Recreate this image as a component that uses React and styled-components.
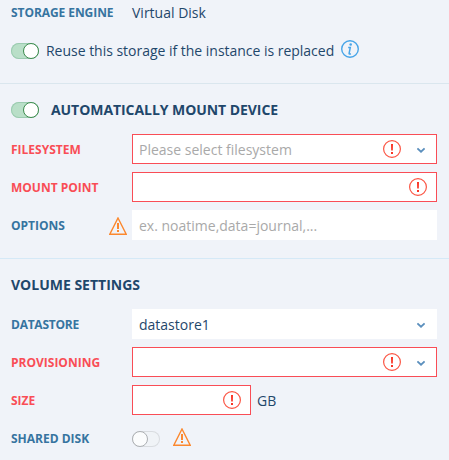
import React from "react";
import styled, { createGlobalStyle } from "styled-components";

const GlobalStyle = createGlobalStyle`
  * { box-sizing: border-box; }
  body {
    margin: 0;
    overflow: hidden;
    background: #f0f3f9;
    color: #1f476b;
    font: 14px/20px "Open Sans", sans-serif;
  }
`;

const Panel = styled.main`
  width: 449px;
  height: 460px;
  overflow: hidden;
  background: #f0f3f9;
`;

const Section = styled.section`
  display: flex;
  flex-direction: column;
  gap: 8px;
  height: ${(p) => p.$height}px;
  padding: ${(p) => p.$top}px 12px 0 11px;
  border-bottom: ${(p) => (p.$line ? `1px solid ${p.$line}` : "none")};
`;

const Row = styled.div`
  display: flex;
  flex: none;
  align-items: center;
  height: 30px;
`;

const EngineRow = styled(Row)`
  height: 28px;
  padding-bottom: 2px;
`;

const HeadingRow = styled(Row)`
  padding-bottom: 2px;
`;

const LabelCell = styled.div`
  display: flex;
  flex: none;
  align-items: center;
  justify-content: space-between;
  width: 121px;
  padding: ${(p) => p.$drop || 0}px 5px 0 0;
`;

const Label = styled.label`
  color: ${(p) => (p.$invalid ? "#f94d56" : "#3674a0")};
  font-size: 12px;
  font-weight: 700;
  line-height: 18px;
  letter-spacing: ${(p) => p.$tracking || 0}px;
  white-space: nowrap;
`;

const Heading = styled.h2`
  margin: 0;
  font-size: 14px;
  font-weight: 700;
  line-height: 20px;
  letter-spacing: ${(p) => p.$tracking || 0}px;
  white-space: nowrap;
`;

const Text = styled.span`
  white-space: nowrap;
`;

const ToggleText = styled(Text)`
  margin: 0 7px;
  letter-spacing: -0.02px;
`;

const Unit = styled(Text)`
  margin-left: 6px;
  padding-top: 2px;
`;

const Track = styled.span`
  display: flex;
  flex: none;
  justify-content: ${(p) => (p.$on ? "flex-end" : "flex-start")};
  width: 28px;
  height: 16px;
  margin: ${(p) => p.$drop || 0}px ${(p) => p.$gap || 0}px 0 0;
  border-radius: 8px;
  background: ${(p) => (p.$on ? "#b9dfc8" : "#f0f3f7")};
  box-shadow: inset 0 0 0 1px ${(p) => (p.$on ? "#9bcbb0" : "#d9dce0")};
`;

const Knob = styled.span`
  width: 16px;
  height: 16px;
  border: 1px solid ${(p) => (p.$on ? "#3d8b4e" : "#acafb3")};
  border-radius: 50%;
  background: ${(p) => (p.$on ? "#fff" : "#fbfcfd")};
`;

const Field = styled.div`
  display: flex;
  flex: none;
  align-items: center;
  width: ${(p) => p.$width || 305}px;
  height: 30px;
  padding: 2px ${(p) => (p.$select ? 11 : 9)}px 0 6px;
  border: 1px solid ${(p) => (p.$invalid ? "#f94d56" : "#fff")};
  background: #fff;
`;

const Value = styled.span`
  flex: 1;
  color: ${(p) => (p.$placeholder ? "#a9a9a9" : "inherit")};
  white-space: nowrap;
`;

const Icon = styled.svg`
  display: block;
  flex: none;
  fill: none;
`;

const FieldIcon = styled(Icon)`
  margin: 0 ${(p) => p.$gap || 0}px 2px 0;
`;

const InfoGlyph = styled(Icon)`
  margin-bottom: 4px;
`;

const WarningGlyph = styled(Icon)`
  margin: 0 0 ${(p) => p.$lift || 0}px ${(p) => p.$gap || 0}px;
`;

const Chevron = () => (
  <Icon width="8" height="6" viewBox="0 0 8 6">
    <path d="M.4 1.4 4 4.7 7.6 1.4" stroke="#5b8fbd" strokeWidth="1.8" />
  </Icon>
);

const Alert = ({ gap }) => (
  <FieldIcon $gap={gap} width="18" height="18" viewBox="0 0 18 18">
    <circle cx="9" cy="9" r="8.4" stroke="#fb5544" strokeWidth="1.2" />
    <path d="M8 4h2l-.2 6.5H8.2zM8 12h2v2H8z" fill="#fa3424" />
  </FieldIcon>
);

const Info = () => (
  <InfoGlyph width="18" height="18" viewBox="0 0 18 18">
    <circle cx="9" cy="9" r="8.3" stroke="#48a5e8" strokeWidth="1.4" />
    <circle cx="9.7" cy="4.5" r="1.3" fill="#48a5e8" />
    <path d="M7.2 7.4h2.1L8.1 13.3q-.2 1.2 1.8.5" stroke="#48a5e8" strokeWidth="1.5" />
  </InfoGlyph>
);

const Warning = ({ gap, lift }) => (
  <WarningGlyph $gap={gap} $lift={lift} width="18" height="18" viewBox="0 0 18 18">
    <path d="M9 1 17.2 17.3H.8z" stroke="#fb882f" strokeWidth="1.4" />
    <path d="M8 6h2v6H8zM8 13h2v2H8z" fill="#fb882f" />
  </WarningGlyph>
);

const Toggle = ({ on, gap, drop }) => (
  <Track $on={on} $gap={gap} $drop={drop} role="switch" aria-checked={!!on}>
    <Knob $on={on} />
  </Track>
);

const FormRow = ({ label, tracking, invalid, warning, children }) => (
  <Row>
    <LabelCell $drop={2}>
      <Label $invalid={invalid} $tracking={tracking}>{label}</Label>
      {warning && <Warning />}
    </LabelCell>
    {children}
  </Row>
);

const Input = ({ value, placeholder, invalid, select, width }) => (
  <Field $invalid={invalid} $select={select} $width={width}>
    <Value $placeholder={!value}>{value || placeholder}</Value>
    {invalid && <Alert gap={select ? 16 : 0} />}
    {select && <Chevron />}
  </Field>
);

export default function App() {
  return (
    <>
      <GlobalStyle />
      <Panel>
        <Section $height={84} $top={0} $line="#dae6ee">
          <EngineRow>
            <LabelCell>
              <Label $tracking={-0.07}>STORAGE ENGINE</Label>
            </LabelCell>
            <Text>Virtual Disk</Text>
          </EngineRow>
          <Row>
            <Toggle on />
            <ToggleText>Reuse this storage if the instance is replaced</ToggleText>
            <Info />
          </Row>
        </Section>
        <Section $height={175} $top={12} $line="#d5e9f7">
          <HeadingRow>
            <Toggle on gap={12} />
            <Heading $tracking={-0.06}>AUTOMATICALLY MOUNT DEVICE</Heading>
          </HeadingRow>
          <FormRow label="FILESYSTEM" invalid>
            <Input placeholder="Please select filesystem" invalid select />
          </FormRow>
          <FormRow label="MOUNT POINT" invalid>
            <Input invalid />
          </FormRow>
          <FormRow label="OPTIONS" warning>
            <Input placeholder="ex. noatime,data=journal,..." />
          </FormRow>
        </Section>
        <Section $height={201} $top={12}>
          <HeadingRow>
            <Heading>VOLUME SETTINGS</Heading>
          </HeadingRow>
          <FormRow label="DATASTORE" tracking={-0.25}>
            <Input value="datastore1" select />
          </FormRow>
          <FormRow label="PROVISIONING" invalid>
            <Input invalid select />
          </FormRow>
          <FormRow label="SIZE" invalid>
            <Input invalid width={119} />
            <Unit>GB</Unit>
          </FormRow>
          <FormRow label="SHARED DISK">
            <Toggle drop={2} />
            <Warning gap={13} lift={2} />
          </FormRow>
        </Section>
      </Panel>
    </>
  );
}
